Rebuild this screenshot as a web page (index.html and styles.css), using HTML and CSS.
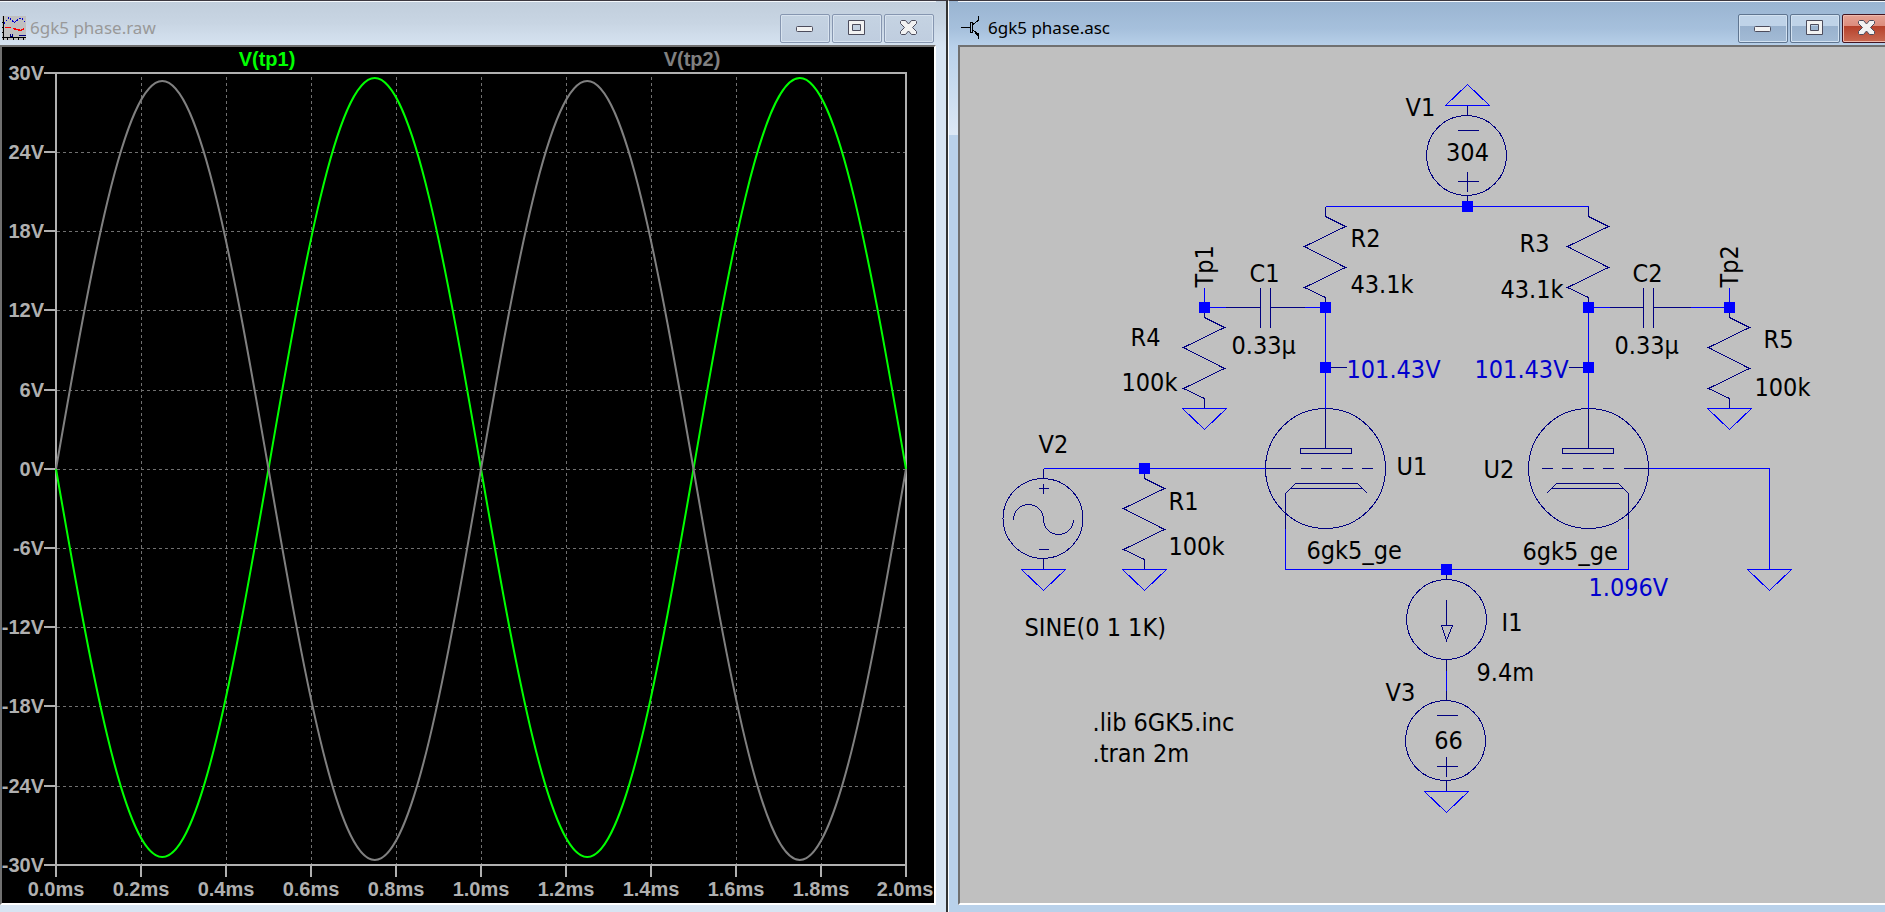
FILE: index.html
```
<!DOCTYPE html>
<html lang="en">
<head>
<meta charset="utf-8">
<title>6gk5 phase</title>
<link rel="stylesheet" href="styles.css">
</head>
<body>
<svg class="defs" aria-hidden="true">
  <symbol id="ico-min" viewBox="0 0 20 16"><rect class="glyph" x="1.5" y="6.5" width="16" height="5" rx="1"/></symbol>
  <symbol id="ico-max" viewBox="0 0 20 16"><path class="glyph" fill-rule="evenodd" d="M1.500 .5h16v14h-16zM5.500 4.500v6h8v-6z"/></symbol>
  <symbol id="ico-close" viewBox="0 0 20 16"><path class="glyph" d="M2.500.5h4l3 3.500 3-3.500h4l1 1v2l-4 4 4 4v2l-1 1h-4l-3-3.500-3 3.500h-4l-1-1v-2l4-4-4-4v-2z"/></symbol>
</svg>
<main class="desktop">
  <section class="window window-plot">
    <header class="titlebar">
      <svg class="app-icon" viewBox="0 0 24 24" aria-hidden="true">
        <rect width="24" height="24" fill="#c0c0c0"/>
        <path d="M1.500 0v24M0 21.500h24M0 6.500h1M0 11.500h1M0 16.500h1M5.500 22v2M11.500 22v2M16.500 22v2M21.500 22v2" stroke="#000" fill="none"/>
        <path d="M2 7.500l5-6 5 5 2-1 3-3h3l3 4" stroke="#0000d0" stroke-dasharray="2 1" fill="none"/>
        <path d="M3 11.500h6M11 12.500l4 1 4 1 3-2" stroke="#f00" stroke-width="1.500" fill="none"/>
        <path d="M8.500 18v2h2v-2M17 19.500h7" stroke="#000080" fill="none"/>
      </svg>
      <h1 class="title">6gk5 phase.raw</h1>
      <div class="controls">
        <button class="control" type="button" aria-label="Minimize"><svg><use href="#ico-min"/></svg></button>
        <button class="control" type="button" aria-label="Maximize"><svg><use href="#ico-max"/></svg></button>
        <button class="control" type="button" aria-label="Close"><svg><use href="#ico-close"/></svg></button>
      </div>
    </header>
    <div class="pane pane-plot">
      <svg class="canvas plot" viewBox="2 47 932 856" preserveAspectRatio="xMinYMin meet" role="img" aria-label="Waveforms V(tp1) and V(tp2)">
        <path class="grid" d="M141.500 77V865M226.500 77V865M311.500 77V865M396.500 77V865M481.500 77V865M566.500 77V865M651.500 77V865M736.500 77V865M821.500 77V865M57 152.500H906M57 231.500H906M57 310.500H906M57 390.500H906M57 469.500H906M57 548.500H906M57 627.500H906M57 706.500H906M57 786.500H906"/>
        <path class="axis" d="M56 73H906V877M44 73H56V877M44 865H906M44 152H56M44 231H56M44 310H56M44 390H56M44 469H56M44 548H56M44 627H56M44 706H56M44 786H56M141 865V877M226 865V877M311 865V877M396 865V877M481 865V877M566 865V877M651 865V877M736 865V877M821 865V877"/>
        <path class="trace trace-1" d="M56 469c34.600 198.800 67.800 388 106.250 388c38.500 0 71.600-189.200 106.250-388c34.600-200.300 67.800-391 106.250-391c38.500 0 71.600 190.700 106.250 391c34.600 198.800 67.800 388 106.250 388c38.500 0 71.600-189.200 106.250-388c34.600-200.300 67.800-391 106.250-391c38.500 0 71.600 190.700 106.250 391"/>
        <path class="trace trace-2" d="M56 469c34.600-198.800 67.800-388 106.250-388c38.500 0 71.600 189.200 106.250 388c34.600 200.300 67.800 391 106.250 391c38.500 0 71.600-190.700 106.250-391c34.600-198.800 67.800-388 106.250-388c38.500 0 71.600 189.200 106.250 388c34.600 200.300 67.800 391 106.250 391c38.500 0 71.600-190.700 106.250-391"/>
        <g class="y-labels">
          <text x="44" y="80">30V</text><text x="44" y="159">24V</text><text x="44" y="238">18V</text><text x="44" y="317">12V</text><text x="44" y="397">6V</text><text x="44" y="476">0V</text><text x="44" y="555">-6V</text><text x="44" y="634">-12V</text><text x="44" y="713">-18V</text><text x="44" y="793">-24V</text><text x="44" y="872">-30V</text>
        </g>
        <g class="x-labels">
          <text x="56" y="896">0.0ms</text><text x="141" y="896">0.2ms</text><text x="226" y="896">0.4ms</text><text x="311" y="896">0.6ms</text><text x="396" y="896">0.8ms</text><text x="481" y="896">1.0ms</text><text x="566" y="896">1.2ms</text><text x="651" y="896">1.4ms</text><text x="736" y="896">1.6ms</text><text x="821" y="896">1.8ms</text><text x="905" y="896">2.0ms</text>
          <text class="name-1" x="267" y="66">V(tp1)</text>
          <text class="name-2" x="692" y="66">V(tp2)</text>
        </g>
      </svg>
    </div>
  </section>
  <section class="window window-schematic">
    <header class="titlebar">
      <svg class="app-icon" viewBox="0 0 24 24" aria-hidden="true">
        <path d="M1 11.500h9M10.500 6v11M12.500 6v11M10 6.500h3M10 16.500h3M13 8.500l5-4v-5M13 14l5 5v4" stroke="#000" fill="none"/>
        <path d="M18 20l-4-5 5 3z" stroke="#000"/>
      </svg>
      <h1 class="title">6gk5 phase.asc</h1>
      <div class="controls">
        <button class="control" type="button" aria-label="Minimize"><svg><use href="#ico-min"/></svg></button>
        <button class="control" type="button" aria-label="Maximize"><svg><use href="#ico-max"/></svg></button>
        <button class="control control-close" type="button" aria-label="Close"><svg><use href="#ico-close"/></svg></button>
      </div>
    </header>
    <div class="pane pane-schematic">
      <svg class="canvas schematic" viewBox="959.5 46.5 925 856" preserveAspectRatio="xMinYMin meet" role="img" aria-label="Phase splitter schematic">
        <defs>
          <path id="resistor" d="M0 0v10l20 10l-41 20l41 21l-41 20l21 10v10"/>
          <path id="ground" d="M-22 0h44l-22 21z"/>
          <rect id="node" x="-5.500" y="-5.500" width="11" height="11"/>
          <g id="tube">
            <circle cx="1325" cy="468" r="60"/>
            <path d="M1325 408V448M1300 448H1351V453H1300ZM1265 468H1290M1300 468H1311M1320 468H1331M1341 468H1352M1361 468H1372M1285 528V493L1295 483H1357L1367 493M1290 488H1362"/>
          </g>
          <g id="source">
            <circle cx="-1" cy="0" r="40"/>
            <path d="M-10 -25H11M-10 26H11M0 16V36M0 -50V-40M0 40V51"/>
          </g>
        </defs>
        <g class="symbols">
          <use href="#source" x="1467" y="155"/>
          <use href="#source" x="1446" y="740"/>
          <use href="#resistor" x="1325" y="206"/>
          <use href="#resistor" x="1588" y="206"/>
          <use href="#resistor" x="1204" y="307"/>
          <use href="#resistor" x="1729" y="307"/>
          <use href="#resistor" x="1144" y="468"/>
          <path d="M1225 307H1260M1260 287V327M1270 287V327M1270 307H1304M1609 307H1643M1643 287V327M1653 287V327M1653 307H1690M1325 367H1346M1568 367H1588"/>
          <use href="#tube"/>
          <use href="#tube" transform="translate(2913 0) scale(-1 1)"/>
          <circle cx="1042.500" cy="518" r="40"/>
          <path d="M1043 468V478M1043 558V569M1038 488H1048M1043 483V493M1038 549H1048M1013 519A15 15 0 0 1 1043 519A15 15 0 0 0 1073 519"/>
          <circle cx="1446" cy="619" r="40"/>
          <path d="M1446 569V579M1446 659V690M1446 599V625M1441 625H1452L1446 640Z"/>
        </g>
        <g class="wires">
          <path d="M1325 206H1588M1204 287V307H1225M1304 307H1325V408M1588 408V307H1609M1690 307H1729V287M1043 468H1265M1285 528V569H1628V528M1648 468H1769V569M1446 670V690"/>
          <use href="#ground" transform="translate(1467 105) scale(1 -1)"/>
          <use href="#ground" x="1204" y="408"/>
          <use href="#ground" x="1729" y="408"/>
          <use href="#ground" x="1043" y="569"/>
          <use href="#ground" x="1144" y="569"/>
          <use href="#ground" x="1769" y="569"/>
          <use href="#ground" x="1446" y="791"/>
        </g>
        <g class="nodes">
          <use href="#node" x="1467" y="206"/>
          <use href="#node" x="1204" y="307"/>
          <use href="#node" x="1325" y="307"/>
          <use href="#node" x="1588" y="307"/>
          <use href="#node" x="1729" y="307"/>
          <use href="#node" x="1325" y="367"/>
          <use href="#node" x="1588" y="367"/>
          <use href="#node" x="1144" y="468"/>
          <use href="#node" x="1446" y="569"/>
        </g>
        <g class="labels">
          <text x="1405" y="115">V1</text>
          <text class="mid" x="1467" y="160">304</text>
          <text x="1350" y="246">R2</text>
          <text x="1350" y="292">43.1k</text>
          <text transform="translate(1212 287) rotate(-90)">Tp1</text>
          <text x="1249" y="281">C1</text>
          <text x="1231" y="353">0.33µ</text>
          <text x="1130" y="345">R4</text>
          <text x="1121" y="390">100k</text>
          <text x="1519" y="251">R3</text>
          <text x="1500" y="297">43.1k</text>
          <text x="1632" y="281">C2</text>
          <text x="1614" y="353">0.33µ</text>
          <text transform="translate(1737 287) rotate(-90)">Tp2</text>
          <text x="1763" y="347">R5</text>
          <text x="1754" y="395">100k</text>
          <text x="1038" y="452">V2</text>
          <text x="1168" y="509">R1</text>
          <text x="1168" y="554">100k</text>
          <text x="1396" y="474">U1</text>
          <text x="1483" y="477">U2</text>
          <text x="1306" y="558">6gk5_ge</text>
          <text x="1522" y="559">6gk5_ge</text>
          <text x="1024" y="635">SINE(0 1 1K)</text>
          <text x="1501" y="630">I1</text>
          <text x="1476" y="680">9.4m</text>
          <text x="1385" y="700">V3</text>
          <text class="mid" x="1448" y="748">66</text>
          <text x="1092" y="730">.lib 6GK5.inc</text>
          <text x="1092" y="761">.tran 2m</text>
          <text class="volts" x="1346" y="377">101.43V</text>
          <text class="volts" x="1474" y="377">101.43V</text>
          <text class="volts" x="1588" y="595">1.096V</text>
        </g>
      </svg>
    </div>
  </section>
</main>
</body>
</html>
```

FILE: styles.css
```
* { box-sizing: border-box; }

body {
  margin: 0;
  background: #d7e4f2;
  font-family: "Noto Sans", sans-serif;
  overflow: hidden;
}

.defs {
  position: absolute;
  width: 0;
  height: 0;
}

.desktop {
  display: grid;
  grid-template-columns: 948fr 937fr;
  height: 100vh;
}

.window {
  display: flex;
  flex-direction: column;
  min-width: 0;
  overflow: hidden;
  border-top: 1px solid #3c3840;
  padding-bottom: 7px;
}

.window-plot {
  padding-right: 10px;
  border-right: 2px solid #333;
  background: linear-gradient(#c1cedc, #c8d5e3 22px, #d7e4f2 46px, #d7e4f2);
  color: #999;
}

.window-schematic {
  padding-left: 9px;
  border-left: 1px solid #fff;
  background: linear-gradient(#99b4d1, #a6c0dc 28px, #b9d1ea 46px, #dce8f5 134px, #b9d1ea 134px);
  color: #000;
}

.titlebar {
  display: flex;
  flex: none;
  align-items: center;
  height: 44px;
  padding-top: 9px;
  border-top: 1px solid #f4f8fc;
}

.window-plot .titlebar {
  padding-right: 2px;
  padding-left: 2px;
}

.app-icon {
  flex: none;
  width: 24px;
  height: 24px;
  shape-rendering: crispEdges;
}

.title {
  flex: 1;
  margin: 0 0 0 4px;
  font-size: 17px;
  font-weight: 400;
  line-height: 24px;
}

.window-schematic .titlebar { padding-left: 2px; }

.controls {
  display: flex;
  flex: none;
  gap: 2px;
}

.window-schematic .controls { margin-right: -7px; }

.control {
  display: flex;
  align-items: center;
  justify-content: center;
  width: 50px;
  height: 29px;
  padding: 0;
  border: 1px solid #8696b0;
  border-radius: 2px;
  background: linear-gradient(#c5d3e2, #bfcddf);
  box-shadow: inset 0 0 0 1px #d8e3ef;
}

.window-schematic .control {
  border-color: #5f7590;
  background: linear-gradient(#bfd3e8 11px, #98b1cd 11px, #a3bbd5);
  box-shadow: inset 0 0 0 1px #d3e2f1;
}

.window-schematic .control-close {
  border-color: #431420;
  background: linear-gradient(#e5a294, #dc8c7d 11px, #b5402a 11px, #c96a52);
  box-shadow: inset 0 0 0 1px #efb9ac;
}

.control svg {
  width: 20px;
  height: 16px;
}

.glyph {
  fill: #f2f2f2;
  stroke: #4c4c5c;
}

.pane {
  flex: 1;
  min-height: 0;
  border: 2px solid #707070;
  border-bottom-color: #fff;
}

.pane-plot {
  border-right-color: #fff;
  background: #000;
}

.pane-schematic {
  border-right: 0;
  background: #c0c0c0;
}

.canvas {
  display: block;
  width: 100%;
  height: 100%;
  fill: none;
}

.plot {
  font: bold 20px "Liberation Sans", Arial, sans-serif;
}

.grid {
  stroke: #707070;
  stroke-dasharray: 3 3;
  shape-rendering: crispEdges;
}

.axis {
  stroke: #b0b0b0;
  stroke-width: 2;
  shape-rendering: crispEdges;
}

.trace { stroke-width: 2; }

.trace-1 { stroke: #0f0; }
.trace-2 { stroke: #808080; }

.y-labels {
  fill: #b0b0b0;
  text-anchor: end;
}

.x-labels {
  fill: #b0b0b0;
  text-anchor: middle;
}

.x-labels .name-1 { fill: #0f0; }
.x-labels .name-2 { fill: #808080; }

.schematic {
  font: 25px "DejaVu Sans Condensed", "Noto Sans", sans-serif;
}

.symbols {
  stroke: #000080;
  shape-rendering: crispEdges;
}

.wires {
  stroke: #0000ff;
  shape-rendering: crispEdges;
}

.nodes { fill: #0000ff; }
.labels { fill: #000; }
.labels .mid { text-anchor: middle; }
.labels .volts { fill: #0000cd; }
```
